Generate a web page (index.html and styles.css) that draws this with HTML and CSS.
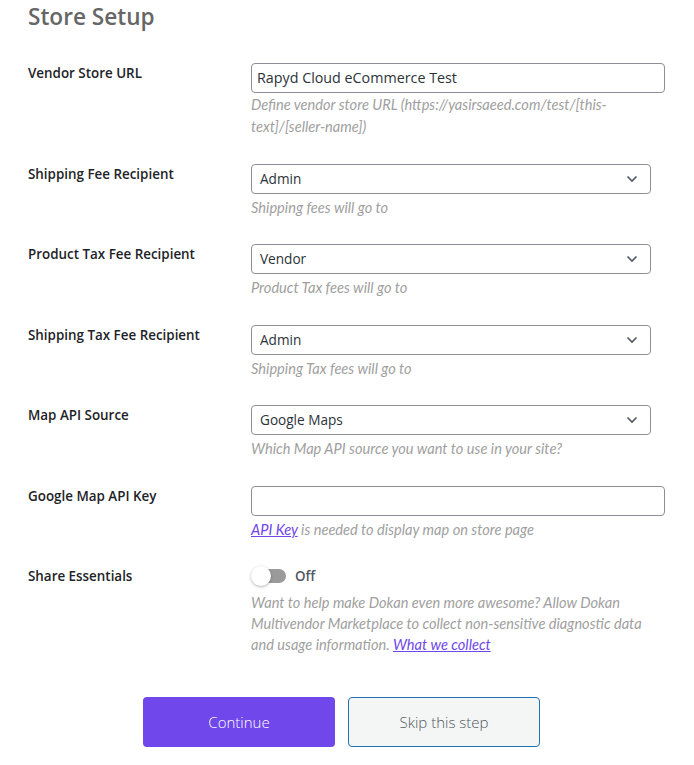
FILE: index.html
```html
<!DOCTYPE html>
<html lang="en">
<head>
<meta charset="utf-8">
<title>Store Setup</title>
<link rel="stylesheet" href="styles.css">
</head>
<body>
<div class="page">
  <h1 class="title">Store Setup</h1>
  <div class="form">
    <div class="row">
      <div class="label">Vendor Store URL</div>
      <div class="field">
        <div class="input">Rapyd Cloud eCommerce Test</div>
        <p class="help help-first">Define vendor store URL (https://yasirsaeed.com/test/[this-text]/[seller-name])</p>
      </div>
    </div>
    <div class="row">
      <div class="label">Shipping Fee Recipient</div>
      <div class="field">
        <div class="select"><span>Admin</span><svg class="chev" viewBox="0 0 12 8" width="12" height="8"><path d="M1.5 1.5 L6 6 L10.5 1.5" fill="none" stroke="#50575e" stroke-width="1.6"/></svg></div>
        <p class="help">Shipping fees will go to</p>
      </div>
    </div>
    <div class="row">
      <div class="label">Product Tax Fee Recipient</div>
      <div class="field">
        <div class="select"><span>Vendor</span><svg class="chev" viewBox="0 0 12 8" width="12" height="8"><path d="M1.5 1.5 L6 6 L10.5 1.5" fill="none" stroke="#50575e" stroke-width="1.6"/></svg></div>
        <p class="help">Product Tax fees will go to</p>
      </div>
    </div>
    <div class="row">
      <div class="label">Shipping Tax Fee Recipient</div>
      <div class="field">
        <div class="select"><span>Admin</span><svg class="chev" viewBox="0 0 12 8" width="12" height="8"><path d="M1.5 1.5 L6 6 L10.5 1.5" fill="none" stroke="#50575e" stroke-width="1.6"/></svg></div>
        <p class="help">Shipping Tax fees will go to</p>
      </div>
    </div>
    <div class="row">
      <div class="label">Map API Source</div>
      <div class="field">
        <div class="select"><span>Google Maps</span><svg class="chev" viewBox="0 0 12 8" width="12" height="8"><path d="M1.5 1.5 L6 6 L10.5 1.5" fill="none" stroke="#50575e" stroke-width="1.6"/></svg></div>
        <p class="help">Which Map API source you want to use in your site?</p>
      </div>
    </div>
    <div class="row">
      <div class="label">Google Map API Key</div>
      <div class="field">
        <div class="input"></div>
        <p class="help"><a href="#" class="link">API Key</a> is needed to display map on store page</p>
      </div>
    </div>
    <div class="row">
      <div class="label">Share Essentials</div>
      <div class="field">
        <div class="toggle-row">
          <span class="toggle"><span class="knob"></span></span>
          <span class="toggle-text">Off</span>
        </div>
        <p class="help help-long">Want to help make Dokan even more awesome? Allow Dokan Multivendor Marketplace to collect non-sensitive diagnostic data and usage information. <a href="#" class="link">What we collect</a></p>
      </div>
    </div>
  </div>
  <div class="actions">
    <button class="btn btn-primary">Continue</button>
    <button class="btn btn-secondary">Skip this step</button>
  </div>
</div>
</body>
</html>
```
FILE: styles.css
```css
html, body {
  margin: 0;
  padding: 0;
  background: #ffffff;
}
body {
  font-family: "Open Sans", "Noto Sans", sans-serif;
  color: #1e1e1e;
}
.page {
  padding: 0 29px 0 28px;
}
.title {
  margin: 0;
  padding-top: 2px;
  font-size: 22.6px;
  line-height: 30px;
  font-weight: 600;
  color: #666666;
}
.form {
  margin-top: 31px;
}
.row {
  display: grid;
  grid-template-columns: 223px 1fr;
  padding-bottom: 25.5px;
}
.label {
  font-size: 13.4px;
  font-weight: 600;
  line-height: 20px;
  color: #1d2327;
}
.field {
  min-width: 0;
}
.input, .select {
  box-sizing: border-box;
  height: 30px;
  border: 1px solid #8c8f94;
  border-radius: 4px;
  line-height: 28px;
  color: #2c3338;
}
.input {
  width: 414px;
  padding: 0 5px;
  font-size: 14.3px;
}
.select {
  width: 400px;
  padding: 0 12px 0 8px;
  font-size: 13.6px;
  display: flex;
  align-items: center;
  justify-content: space-between;
}
.chev {
  display: block;
}
.help {
  margin: 3px 0 0;
  width: 400px;
  font-family: "Lato", sans-serif;
  font-style: italic;
  font-size: 14.6px;
  line-height: 22px;
  color: #a0a0a0;
}
.help-first {
  margin-top: 1px;
}
.help-long {
  margin-top: 6px;
  line-height: 21px;
}
.link {
  color: #7047eb;
  text-decoration: underline;
}
.toggle-row {
  display: flex;
  align-items: center;
  height: 20px;
}
.toggle {
  position: relative;
  display: inline-block;
  width: 34px;
  height: 14px;
  margin-left: 1px;
  border-radius: 7px;
  background: #9a9a9a;
}
.knob {
  position: absolute;
  left: -1px;
  top: -3px;
  width: 20px;
  height: 20px;
  border-radius: 50%;
  background: #ffffff;
  box-shadow: 0 1px 3px rgba(0,0,0,0.3);
}
.toggle-text {
  margin-left: 9px;
  font-size: 13.4px;
  font-weight: 600;
  color: #50575e;
}
.actions {
  display: flex;
  justify-content: center;
  gap: 13px;
  margin-top: 16px;
  padding-right: 10px;
}
.btn {
  box-sizing: border-box;
  width: 192px;
  height: 50px;
  border-radius: 4px;
  font-family: "Open Sans", "Noto Sans", sans-serif;
  font-size: 15px;
  font-weight: 300;
  cursor: pointer;
}
.btn-primary {
  background: #7047eb;
  border: none;
  color: #ffffff;
}
.btn-secondary {
  background: #f4f6f5;
  border: 1px solid #2271b1;
  color: #50575e;
}
```
